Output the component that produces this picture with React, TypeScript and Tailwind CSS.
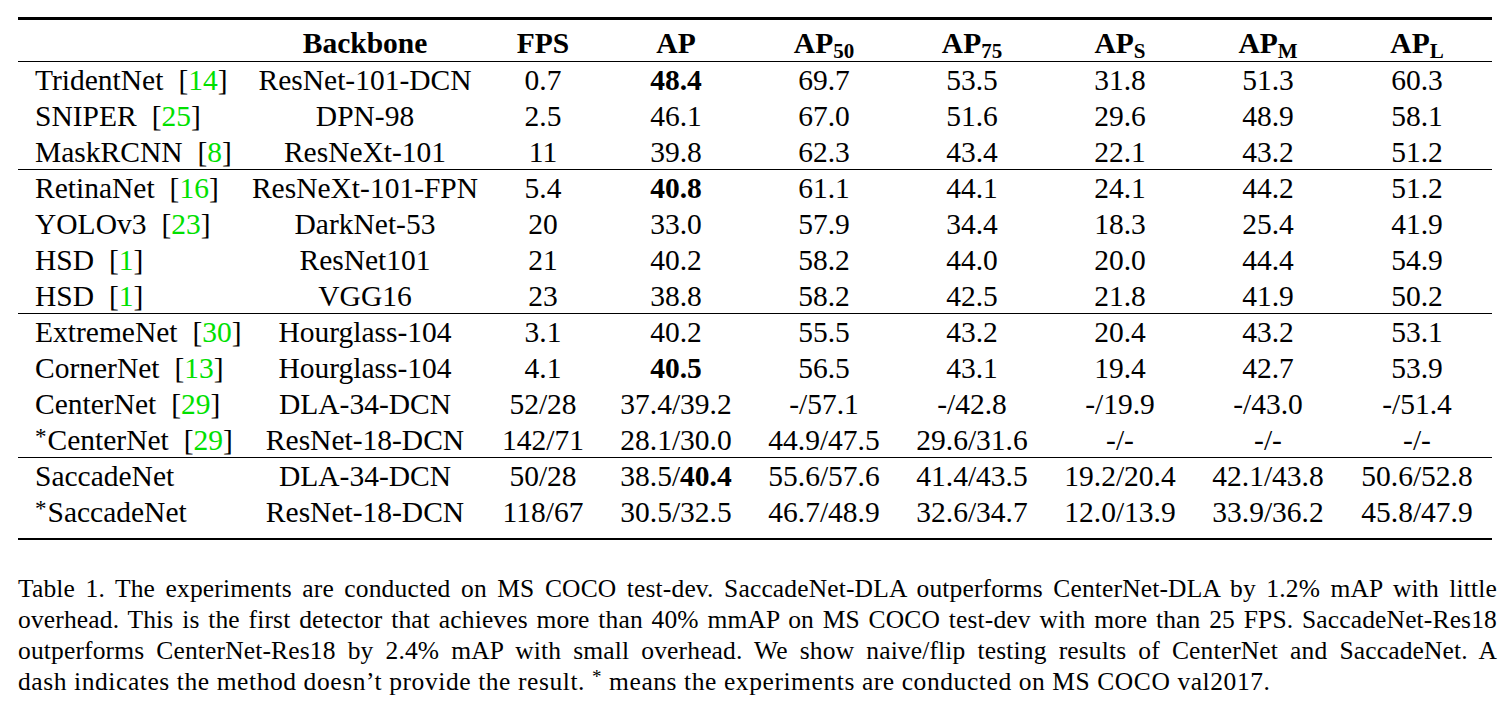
import React from "react";

type Cell = string | { b: string } | { parts: (string | { b: string })[] };

type Row = {
  name: string;
  cite?: string;
  star?: boolean;
  backbone: string;
  cells: Cell[];
};

const groups: Row[][] = [
  [
    { name: "TridentNet", cite: "14", backbone: "ResNet-101-DCN", cells: ["0.7", { b: "48.4" }, "69.7", "53.5", "31.8", "51.3", "60.3"] },
    { name: "SNIPER", cite: "25", backbone: "DPN-98", cells: ["2.5", "46.1", "67.0", "51.6", "29.6", "48.9", "58.1"] },
    { name: "MaskRCNN", cite: "8", backbone: "ResNeXt-101", cells: ["11", "39.8", "62.3", "43.4", "22.1", "43.2", "51.2"] },
  ],
  [
    { name: "RetinaNet", cite: "16", backbone: "ResNeXt-101-FPN", cells: ["5.4", { b: "40.8" }, "61.1", "44.1", "24.1", "44.2", "51.2"] },
    { name: "YOLOv3", cite: "23", backbone: "DarkNet-53", cells: ["20", "33.0", "57.9", "34.4", "18.3", "25.4", "41.9"] },
    { name: "HSD", cite: "1", backbone: "ResNet101", cells: ["21", "40.2", "58.2", "44.0", "20.0", "44.4", "54.9"] },
    { name: "HSD", cite: "1", backbone: "VGG16", cells: ["23", "38.8", "58.2", "42.5", "21.8", "41.9", "50.2"] },
  ],
  [
    { name: "ExtremeNet", cite: "30", backbone: "Hourglass-104", cells: ["3.1", "40.2", "55.5", "43.2", "20.4", "43.2", "53.1"] },
    { name: "CornerNet", cite: "13", backbone: "Hourglass-104", cells: ["4.1", { b: "40.5" }, "56.5", "43.1", "19.4", "42.7", "53.9"] },
    { name: "CenterNet", cite: "29", backbone: "DLA-34-DCN", cells: ["52/28", "37.4/39.2", "-/57.1", "-/42.8", "-/19.9", "-/43.0", "-/51.4"] },
    { name: "CenterNet", cite: "29", star: true, backbone: "ResNet-18-DCN", cells: ["142/71", "28.1/30.0", "44.9/47.5", "29.6/31.6", "-/-", "-/-", "-/-"] },
  ],
  [
    { name: "SaccadeNet", backbone: "DLA-34-DCN", cells: ["50/28", { parts: ["38.5/", { b: "40.4" }] }, "55.6/57.6", "41.4/43.5", "19.2/20.4", "42.1/43.8", "50.6/52.8"] },
    { name: "SaccadeNet", star: true, backbone: "ResNet-18-DCN", cells: ["118/67", "30.5/32.5", "46.7/48.9", "32.6/34.7", "12.0/13.9", "33.9/36.2", "45.8/47.9"] },
  ],
];

const grid = "grid grid-cols-[228px_238px_118px_148px_148px_148px_148px_148px_150px]";

const renderCell = (c: Cell) => {
  if (typeof c === "string") return c;
  if ("b" in c) return <span className="font-bold">{c.b}</span>;
  return c.parts.map((p, i) =>
    typeof p === "string" ? <span key={i}>{p}</span> : <span key={i} className="font-bold">{p.b}</span>
  );
};

const Sub = ({ children }: { children: React.ReactNode }) => (
  <span className="relative top-[5px] text-[21px]">{children}</span>
);

const headers: React.ReactNode[] = [
  "FPS",
  "AP",
  <>AP<Sub>50</Sub></>,
  <>AP<Sub>75</Sub></>,
  <>AP<Sub>S</Sub></>,
  <>AP<Sub>M</Sub></>,
  <>AP<Sub>L</Sub></>,
];

const TableRow = ({ row }: { row: Row }) => (
  <div className={`${grid} h-[36px] leading-[36px] whitespace-nowrap`}>
    <div className="pl-[17px]">
      {row.star && <span className="relative -top-[6px] text-[23px] mr-[1px]">*</span>}
      {row.name}
      {row.cite && (
        <span className="ml-[15px]">
          [<span className="text-[#00e000]">{row.cite}</span>]
        </span>
      )}
    </div>
    <div className="text-center">{row.backbone}</div>
    {row.cells.map((c, i) => (
      <div key={i} className="text-center">
        {renderCell(c)}
      </div>
    ))}
  </div>
);

const captionLines = [
  "Table 1. The experiments are conducted on MS COCO test-dev. SaccadeNet-DLA outperforms CenterNet-DLA by 1.2% mAP with little",
  "overhead. This is the first detector that achieves more than 40% mmAP on MS COCO test-dev with more than 25 FPS. SaccadeNet-Res18",
  "outperforms CenterNet-Res18 by 2.4% mAP with small overhead.  We show naive/flip testing results of CenterNet and SaccadeNet.  A",
];

export default function App() {
  return (
    <div className="w-[1500px] h-[703px] bg-white text-black font-['Liberation_Serif','Times_New_Roman',serif] pt-[17px] pl-[18px] overflow-hidden">
      <div className="w-[1474px] text-[29.5px]">
        <div className="h-[3px] bg-black" />
        <div className={`${grid} h-[42px] pt-[5px] leading-[36px] font-bold whitespace-nowrap`}>
          <div />
          <div className="text-center">Backbone</div>
          {headers.map((h, i) => (
            <div key={i} className="text-center">
              {h}
            </div>
          ))}
        </div>
        {groups.map((g, gi) => (
          <div key={gi} className={`-mt-px border-t border-black ${gi === groups.length - 1 ? "pb-[8px]" : ""}`}>
            {g.map((r, ri) => (
              <TableRow key={ri} row={r} />
            ))}
          </div>
        ))}
        <div className="h-[2px] bg-black" />
      </div>

      <div className="w-[1479px] mt-[33px] text-[25.5px] leading-[31px]">
        {captionLines.map((l) => (
          <div key={l} className="text-justify [text-align-last:justify] tracking-[0.15px]">
            {l}
          </div>
        ))}
        <div className="tracking-[0.58px]">
          dash indicates the method doesn’t provide the result.{" "}
          <span className="relative -top-[7px] text-[19px]">*</span> means the experiments are conducted on MS COCO val2017.
        </div>
      </div>
    </div>
  );
}
